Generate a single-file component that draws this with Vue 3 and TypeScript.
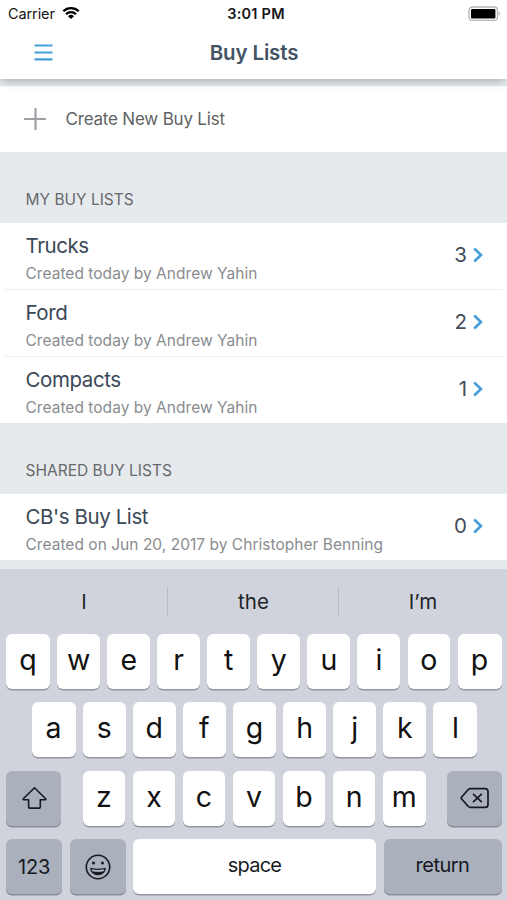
<script setup lang="ts">
interface BuyList {
  name: string
  meta: string
  count: number
}

interface Section {
  title: string
  lists: BuyList[]
}

const sections: Section[] = [
  {
    title: 'MY BUY LISTS',
    lists: [
      { name: 'Trucks', meta: 'Created today by Andrew Yahin', count: 3 },
      { name: 'Ford', meta: 'Created today by Andrew Yahin', count: 2 },
      { name: 'Compacts', meta: 'Created today by Andrew Yahin', count: 1 },
    ],
  },
  {
    title: 'SHARED BUY LISTS',
    lists: [
      { name: "CB's Buy List", meta: 'Created on Jun 20, 2017 by Christopher Benning', count: 0 },
    ],
  },
]

const suggestions: string[] = ['I', 'the', 'I’m']
const topRow: string[] = [...'qwertyuiop']
const homeRow: string[] = [...'asdfghjkl']
const bottomRow: string[] = [...'zxcvbnm']
</script>

<template>
  <div class="screen">
    <header class="header">
      <div class="status">
        <div class="carrier">
          <span>Carrier</span>
          <svg class="wifi" width="18" height="14" viewBox="0 0 18 14">
            <path d="M1.300 5.300a11 11 0 0 1 15.400 0M4 8.200a7.100 7.100 0 0 1 10 0" fill="none" stroke="#000" stroke-width="2.300" />
            <path d="M9 13 6 10.200a4.300 4.300 0 0 1 6 0z" fill="#000" />
          </svg>
        </div>
        <div class="time">3:01 PM</div>
        <svg class="battery" width="33" height="16" viewBox="0 0 33 16">
          <rect x="1" y="1" width="28.500" height="13.400" rx="3.400" fill="#fff" stroke="#b4b4b4" stroke-width="1.300" />
          <rect x="3" y="3" width="24.400" height="9.400" rx="1.200" fill="#000" />
          <path d="M30.800 5.600v4.200c1.300-.6 1.300-3.600 0-4.200z" fill="#999" />
        </svg>
      </div>
      <div class="nav">
        <svg class="menu" width="19" height="17" viewBox="0 0 19 17">
          <path d="M.500 1.500h18M.500 8.500h18M.500 15.300h18" stroke="#429fd9" stroke-width="2.200" />
        </svg>
        <h1>Buy Lists</h1>
      </div>
    </header>

    <div class="create">
      <svg width="22" height="22" viewBox="0 0 22 22">
        <path d="M11.500 0v22M0 11h22" stroke="#9da1a6" stroke-width="2.200" />
      </svg>
      <span>Create New Buy List</span>
    </div>

    <section v-for="s in sections" :key="s.title">
      <h2>{{ s.title }}</h2>
      <ul>
        <li v-for="l in s.lists" :key="l.name">
          <div class="info">
            <span class="name">{{ l.name }}</span>
            <span class="meta">{{ l.meta }}</span>
          </div>
          <span class="count">{{ l.count }}</span>
          <svg class="chevron" width="11" height="16" viewBox="0 0 11 16">
            <path d="M1.200 1.500 8 8l-6.800 6.500" fill="none" stroke="#459edb" stroke-width="2.600" />
          </svg>
        </li>
      </ul>
    </section>

    <div class="keyboard">
      <div class="suggestions">
        <div v-for="w in suggestions" :key="w" class="word">{{ w }}</div>
      </div>
      <div class="row full">
        <div v-for="k in topRow" :key="k" class="key">{{ k }}</div>
      </div>
      <div class="row full home">
        <div v-for="k in homeRow" :key="k" class="key">{{ k }}</div>
      </div>
      <div class="row third">
        <div class="key dark">
          <svg width="26" height="24" viewBox="0 0 26 24">
            <path d="M13.500 1.800 2.300 12.800q-.500.900.500.900H7.600v7.200q0 1.200 1.200 1.200h9.300q1.200 0 1.200-1.200v-7.200h4.900q1 0 .5-.9z" fill="none" stroke="#16191f" stroke-width="1.600" stroke-linejoin="round" />
          </svg>
        </div>
        <div class="letters">
          <div v-for="k in bottomRow" :key="k" class="key">{{ k }}</div>
        </div>
        <div class="key dark">
          <svg width="29" height="22" viewBox="0 0 29 22">
            <path d="M10.500 1.600H25q3 0 3 3v12.800q0 3-3 3H10.500q-1.300 0-2.200-.9L1.700 12q-1-1 0-2L8.300 2.500q.9-.9 2.200-.9z" fill="none" stroke="#16191f" stroke-width="1.700" stroke-linejoin="round" />
            <path d="m13 6.800 8.800 8.400m0-8.400-8.800 8.400" stroke="#16191f" stroke-width="1.700" />
          </svg>
        </div>
      </div>
      <div class="row fourth">
        <div class="key dark label numbers">123</div>
        <div class="key dark emoji">
          <svg width="26" height="26" viewBox="0 0 26 26">
            <circle cx="13" cy="13" r="11.700" fill="none" stroke="#16191f" stroke-width="1.600" />
            <circle cx="8.500" cy="9" r="1.500" fill="#16191f" />
            <circle cx="17.500" cy="9" r="1.500" fill="#16191f" />
            <path d="M5.200 13.800q7.800 2 15.600 0c0 4.600-3.500 7.500-7.800 7.500s-7.800-2.900-7.800-7.500z" fill="#16191f" />
            <path d="M6.700 15.300q6.300 1.400 12.600 0-.2 1.200-.8 1.900-5.500 1.300-11 0-.6-.7-.8-1.900z" fill="#b9bec8" />
          </svg>
        </div>
        <div class="key label space">space</div>
        <div class="key dark label return">return</div>
      </div>
    </div>
  </div>
</template>

<style>
body {
  margin: 0;
  background: #e6eaed;
}
</style>

<style scoped>
.screen {
  display: flex;
  flex-direction: column;
  width: 507px;
  height: 900px;
  overflow: hidden;
  background: #e6eaed;
  font-family: Inter, 'Liberation Sans', sans-serif;
}

.header {
  position: relative;
  height: 79px;
  background: #fff;
  box-shadow: 0 5px 8px -2px rgba(50, 75, 80, 0.32);
}

.status {
  display: grid;
  grid-template-columns: 1fr auto 1fr;
  height: 28px;
  align-items: center;
  padding: 0 6px 0 8px;
  color: #151515;
  font-size: 14.500px;
}

.carrier {
  display: flex;
  align-items: center;
  gap: 7px;
  margin-top: -2px;
  letter-spacing: -0.1px;
}

.time {
  margin-top: -2px;
  padding-left: 3px;
  font-weight: 600;
  letter-spacing: 0.25px;
}

.battery {
  justify-self: end;
  margin-top: -1px;
}

.nav {
  display: grid;
  grid-template-columns: 1fr auto 1fr;
  align-items: center;
  height: 49px;
  padding-left: 1px;
}

.menu {
  margin-left: 33px;
}

h1 {
  margin: 0;
  color: #425364;
  font-size: 20.500px;
  font-weight: 600;
  letter-spacing: -0.15px;
  white-space: nowrap;
}

.create {
  display: flex;
  align-items: center;
  gap: 20px;
  height: 66px;
  margin-top: 7px;
  padding-left: 23.500px;
  box-sizing: border-box;
  background: #fff;
  color: #606365;
  font-size: 17px;
  letter-spacing: -0.2px;
}

h2 {
  height: 71px;
  margin: 0;
  padding: 37px 25.500px 0;
  box-sizing: border-box;
  color: #66696c;
  font-size: 15.500px;
  font-weight: 400;
  line-height: 22px;
}

ul {
  margin: 0;
  padding: 0;
  background: #fff;
  list-style: none;
}

li {
  display: flex;
  align-items: center;
  height: 66px;
  margin: 0 4px;
  padding: 0 19.500px 0 21.500px;
}

li + li {
  border-top: 1px solid #eceeef;
}

.info {
  display: flex;
  flex: 1;
  flex-direction: column;
  padding-top: 7px;
}

.name {
  color: #3b4858;
  font-size: 20.500px;
  letter-spacing: -0.42px;
  line-height: 28px;
}

.meta {
  color: #898c8f;
  font-size: 15.500px;
  letter-spacing: 0.03px;
  line-height: 28px;
}

.count {
  margin: -3px 5.500px 0 0;
  color: #434d58;
  font-size: 20.500px;
}

.chevron {
  margin-top: -2px;
}

.keyboard {
  height: 331px;
  margin-top: 9px;
  background: #d0d3dc;
}

.suggestions {
  display: grid;
  grid-template-columns: 168px 171px 168px;
  align-items: center;
  height: 64.500px;
}

.word {
  height: 29px;
  color: #20242b;
  font-size: 20.500px;
  line-height: 29px;
  text-align: center;
}

.word + .word {
  box-shadow: -1px 0 #b9bdc7;
}

.row {
  display: flex;
  gap: 7.300px;
  height: 55px;
  margin-bottom: 13.500px;
  padding: 0 5.500px 0 6px;
}

.home {
  padding: 0 29.500px 0 31.500px;
}

.key {
  display: flex;
  flex: 1;
  align-items: center;
  justify-content: center;
  box-sizing: border-box;
  padding-bottom: 3px;
  border-radius: 6px;
  background: #fff;
  box-shadow: 0 1.500px 0 #94979e;
  color: #111;
  font-size: 28.500px;
  line-height: 52px;
}

.full .key:first-child,
.full .key:last-child {
  flex: 0 0 44px;
}

.dark {
  padding-bottom: 0;
  background: #aab0bc;
  box-shadow: 0 1.500px 0 #888d97;
}

.third {
  gap: 21px;
}

.third > .dark {
  flex: 0 0 55px;
}

.letters {
  display: flex;
  flex: 1;
  gap: 7.300px;
  padding-left: 0.5px;
}

.label {
  color: #16191f;
  font-size: 20px;
}

.fourth {
  gap: 7.500px;
}

.fourth .numbers,
.fourth .emoji {
  flex: 0 0 56px;
}

.numbers {
  letter-spacing: -0.2px;
}

.space {
  padding-bottom: 4px;
  letter-spacing: -0.75px;
}

.fourth .return {
  flex: 0 0 118px;
  padding-bottom: 4px;
  letter-spacing: -0.5px;
}
</style>
